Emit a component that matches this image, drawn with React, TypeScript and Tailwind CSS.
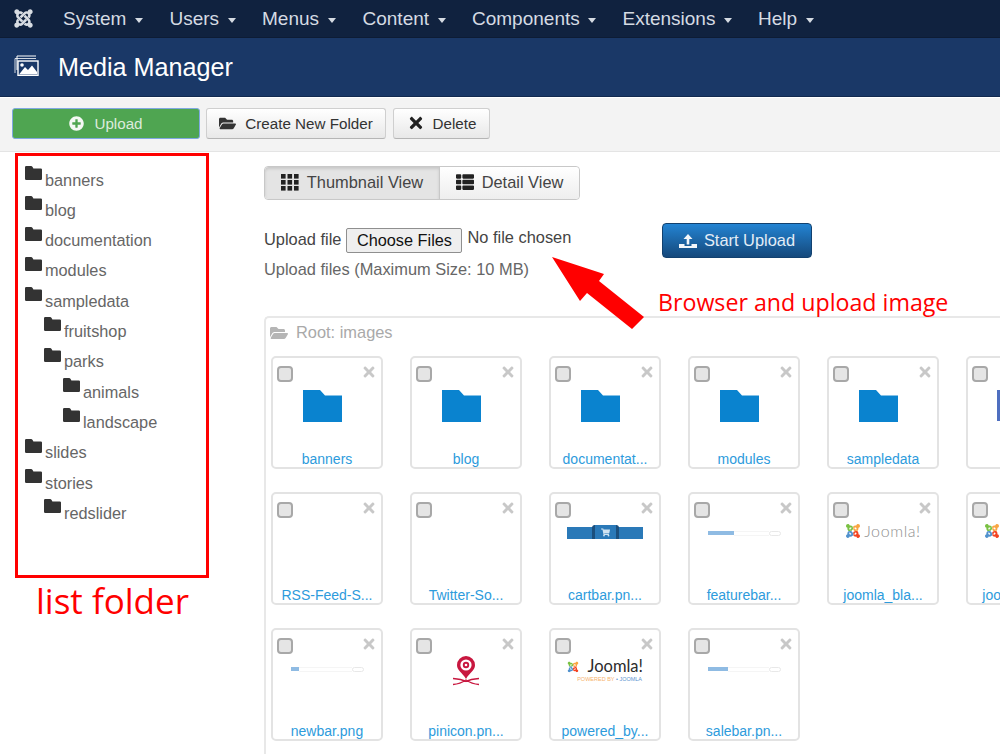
import { FaFolderOpen, FaJoomla, FaPlusCircle, FaShoppingCart, FaThList, FaTimes } from "react-icons/fa";

const navItems = [
  { label: "System", width: "w-[63px]" },
  { label: "Users", width: "w-[49px]" },
  { label: "Menus", width: "w-[57px]" },
  { label: "Content", width: "w-[66px]" },
  { label: "Components", width: "w-[107px]" },
  { label: "Extensions", width: "w-[92px]" },
  { label: "Help", width: "w-[39px]" },
];

const tree = [
  { name: "banners", level: 0 },
  { name: "blog", level: 0 },
  { name: "documentation", level: 0 },
  { name: "modules", level: 0 },
  { name: "sampledata", level: 0 },
  { name: "fruitshop", level: 1 },
  { name: "parks", level: 1 },
  { name: "animals", level: 2 },
  { name: "landscape", level: 2 },
  { name: "slides", level: 0 },
  { name: "stories", level: 0 },
  { name: "redslider", level: 1 },
];

const cards = [
  { label: "banners", thumb: "folder" },
  { label: "blog", thumb: "folder" },
  { label: "documentat...", thumb: "folder" },
  { label: "modules", thumb: "folder" },
  { label: "sampledata", thumb: "folder" },
  { label: "", thumb: "purple" },
  { label: "RSS-Feed-S...", thumb: "" },
  { label: "Twitter-So...", thumb: "" },
  { label: "cartbar.pn...", thumb: "cart" },
  { label: "featurebar...", thumb: "feature" },
  { label: "joomla_bla...", thumb: "joomla" },
  { label: "joomla_log...", thumb: "joomla" },
  { label: "newbar.png", thumb: "newbar" },
  { label: "pinicon.pn...", thumb: "pin" },
  { label: "powered_by...", thumb: "powered" },
  { label: "salebar.pn...", thumb: "salebar" },
];

const Caret = () => (
  <span className="w-0 h-0 border-x-[4.5px] border-x-transparent border-t-[5px] border-t-[#d5dbe3] mt-[2px]" />
);

const TreeFolder = () => (
  <svg viewBox="0 0 17 14" className="w-[17px] h-[14px] mt-[2.400px] shrink-0" fill="#333">
    <path d="M0 1.200Q0 0 1.200 0H6Q7 0 7.600 1L8.400 2.400H15.800Q17 2.400 17 3.600V12.800Q17 14 15.800 14H1.200Q0 14 0 12.800Z" />
  </svg>
);

const BlueFolder = () => (
  <svg viewBox="0 0 39 32" className="w-[39px] h-[32px] mt-[8px] mr-[9px]" fill="#0a83cf">
    <path d="M0 0H17L22 5.500H39V32H0Z" />
  </svg>
);

const MediaIcon = () => (
  <svg viewBox="0 0 26 21" className="w-[26px] h-[21px] mr-[19px] -mt-[3px]" fill="none">
    <path d="M4 15V1H23" stroke="#fff" strokeWidth="1" />
    <path d="M2 18V3.500H23" stroke="#fff" strokeWidth="1" opacity="0.8" />
    <rect x="5" y="6" width="20" height="14.500" fill="#1a3867" stroke="#fff" strokeWidth="1.400" />
    <circle cx="9" cy="10" r="1.800" fill="#fff" />
    <path d="M6 19.500L12 12L15 15L19 10.500L24 17V19.500Z" fill="#fff" />
  </svg>
);

const GridIcon = () => (
  <svg viewBox="0 0 18 17" className="w-[18px] h-[17px]" fill="#222">
    {[0, 6.500, 13].map((x) =>
      [0, 6, 12].map((y) => <rect key={`${x}-${y}`} x={x} y={y} width="4.600" height="4.600" />),
    )}
  </svg>
);

const JoomlaMark = ({ size }: { size: string }) => (
  <span className={`relative block shrink-0 ${size}`}>
    <FaJoomla className="absolute inset-0 w-full h-full text-[#7ac143] [clip-path:inset(0_50%_50%_0)]" />
    <FaJoomla className="absolute inset-0 w-full h-full text-[#f9a541] [clip-path:inset(0_0_50%_50%)]" />
    <FaJoomla className="absolute inset-0 w-full h-full text-[#f44321] [clip-path:inset(50%_0_0_50%)]" />
    <FaJoomla className="absolute inset-0 w-full h-full text-[#5091cd] [clip-path:inset(50%_50%_0_0)]" />
  </span>
);

const TinyBar = ({ fill, width }: { fill: string; width: string }) => (
  <div className={`flex items-center h-[6px] mt-[12px] ${width}`}>
    <div className={`h-[4px] bg-[#8fbbe3] ${fill}`} />
    <div className="flex-1 h-[5px] border-y border-[#f5f5f5]" />
    <div className="w-[12px] h-[5px] border border-[#e8e8e8] rounded-full" />
  </div>
);

const Thumb = ({ type }: { type: string }) => {
  if (type === "folder") return <BlueFolder />;
  if (type === "purple") return <div className="w-[50px] h-[31px] mt-[8px] bg-[#4f6fc0]" />;
  if (type === "cart") {
    return (
      <div className="w-[76px] h-[12px] mt-[9px] bg-[#2a79b8] flex justify-center">
        <div className="w-[27px] h-[14px] -mt-[2px] bg-[#2a79b8] border-x-[3px] border-[#1b4f7d] rounded-t-[3px] flex items-center justify-center">
          <FaShoppingCart className="w-[9px] h-[9px] text-[#cfe3f2]" />
        </div>
      </div>
    );
  }
  if (type === "feature") return <TinyBar fill="w-[26px]" width="w-[73px]" />;
  if (type === "salebar") return <TinyBar fill="w-[20px]" width="w-[73px]" />;
  if (type === "newbar") return <TinyBar fill="w-[8px]" width="w-[73px]" />;
  if (type === "joomla") {
    return (
      <div className="flex items-center h-fit gap-[3px] mt-[5px]">
        <JoomlaMark size="w-[16px] h-[16px]" />
        <span className="text-[16px] leading-[16px] text-[#8f8f8f] font-['Lato',sans-serif] font-light tracking-[0.6px]">Joomla!</span>
      </div>
    );
  }
  if (type === "powered") {
    return (
      <div className="mt-[3px] flex flex-col items-end w-[76px] h-fit">
        <div className="flex items-center justify-between w-full">
          <JoomlaMark size="w-[12px] h-[12px]" />
          <span className="text-[16.500px] leading-[19px] text-[#2b2b2b] font-['Lato',sans-serif]">Joomla!</span>
        </div>
        <span className="text-[5.500px] leading-[7px] whitespace-nowrap mr-[1px]">
          <span className="text-[#f6b26b]">POWERED BY </span>
          <span className="text-[#5b93cf]">• JOOMLA</span>
        </span>
      </div>
    );
  }
  if (type === "pin") {
    return (
      <svg viewBox="0 0 26 30" className="w-[26px] h-[30px] mt-[2px]" fill="none">
        <path d="M13 23C9 16 4 14.500 4 9A9 9 0 0 1 22 9C22 14.500 17 16 13 23Z" fill="#c8173f" />
        <circle cx="13" cy="9" r="5.600" fill="#fff" />
        <circle cx="13" cy="9" r="3.200" fill="#c8173f" />
        <circle cx="13" cy="9" r="1.300" fill="#fff" />
        <path d="M0 22.500C6 23 10 24 13 25.500C16 24 20 23 26 22.500M0 28.500C6 28 10 26 13 24C16 26 20 28 26 28.500" stroke="#c8173f" strokeWidth="1.300" />
      </svg>
    );
  }
  return null;
};

const Card = ({ label, thumb }: { label: string; thumb: string }) => (
  <div className="w-[112px] h-[113px] border-2 border-[#e3e3e3] rounded-[5px] flex flex-col bg-white">
    <div className="flex justify-between items-start mt-[8px] h-[16px] pl-[4px] pr-[4px]">
      <span className="w-[16px] h-[16px] bg-[#e5e5e5] border-2 border-[#a8a8a8] rounded-[4px]" />
      <FaTimes className="w-[16px] h-[16px] -mt-[2px] text-[#c8c8c8]" />
    </div>
    <div className="h-[67px] flex justify-center">
      <Thumb type={thumb} />
    </div>
    <div className="h-[18px] leading-[20px] text-[14px] text-center text-[#2d9bdc] whitespace-nowrap">{label}</div>
  </div>
);

const App = () => {
  return (
    <div className="relative w-[1000px] h-[754px] overflow-hidden bg-white font-['Liberation_Sans',Arial,sans-serif]">
      <nav className="h-[38px] bg-[#10223f] border-b border-[#0d1c35] flex items-center pl-[13px] text-[19px] text-[#d5dbe3]">
        <FaJoomla className="w-[21px] h-[21px] text-[#d8dde3] mr-[29px] -mt-[1px]" />
        <div className="flex items-center gap-[26.500px] pt-[1px]">
          {navItems.map((item) => (
            <div key={item.label} className="flex items-center gap-[9px]">
              <span className={`${item.width} whitespace-nowrap`}>{item.label}</span>
              <Caret />
            </div>
          ))}
        </div>
      </nav>

      <header className="h-[59px] bg-[#1a3867] border-b border-[#12294f] flex items-center pl-[13px] text-white">
        <MediaIcon />
        <h1 className="text-[25.200px] leading-none pt-[2px]">Media Manager</h1>
      </header>

      <div className="h-[55px] bg-[#f3f3f3] border-t border-b border-t-white border-b-[#e4e4e4] flex items-start gap-[6px] pl-[12px] pt-[10px] text-[15.200px] text-[#333]">
        <button className="w-[188px] h-[31px] pt-[1px] flex items-center justify-center gap-[10px] bg-[#4fa551] border border-[#7fa8e0] rounded-[3px] text-[#dcebdc]">
          <FaPlusCircle className="w-[15px] h-[15px] -mt-[2px] text-[#f4f8f4]" />
          Upload
        </button>
        <button className="w-[180px] h-[31px] pt-[1px] flex items-center justify-center gap-[9px] bg-gradient-to-b from-white to-[#e8e8e8] border border-[#cfcfcf] border-b-[#b5b5b5] rounded-[3px]">
          <FaFolderOpen className="w-[17px] h-[17px] -mt-[2px] text-[#333]" />
          Create New Folder
        </button>
        <button className="w-[97px] h-[31px] pt-[1px] ml-[1px] flex items-center justify-center gap-[8px] bg-gradient-to-b from-white to-[#e8e8e8] border border-[#cfcfcf] border-b-[#b5b5b5] rounded-[3px]">
          <FaTimes className="w-[18px] h-[18px] -mt-[2px] text-[#222]" />
          Delete
        </button>
      </div>

      <div className="flex">
        <aside className="w-[264px] shrink-0 pt-[11.600px] pl-[25px] text-[16.300px] text-[#666]">
          {tree.map((node) => (
            <div key={node.name} className={`flex h-[30.300px] leading-[30.300px] gap-[3px] ${node.level === 1 ? "ml-[19px]" : node.level === 2 ? "ml-[38px]" : ""}`}>
              <TreeFolder />
              <span className="pt-[1px]">{node.name}</span>
            </div>
          ))}
        </aside>

        <main className="flex-1 min-w-0 pt-[14px] text-[16.400px] text-[#555]">
          <div className="flex w-[316px] h-[34px] rounded-[4px] border border-[#c8c8c8] text-[#444]">
            <div className="w-[175px] pb-[2px] flex items-center justify-center gap-[8px] bg-[#e4e4e4] border-r border-[#c8c8c8] rounded-l-[4px] shadow-[inset_0_2px_3px_rgba(0,0,0,0.12)]">
              <GridIcon />
              Thumbnail View
            </div>
            <div className="flex-1 pb-[2px] flex items-center justify-center gap-[8px] bg-gradient-to-b from-white to-[#eeeeee] rounded-r-[4px]">
              <FaThList className="w-[18px] h-[18px] text-[#222]" />
              Detail View
            </div>
          </div>

          <div className="flex items-start mt-[23px]">
            <div className="w-[398px]">
              <div className="flex items-center mt-[5px] h-[25px] text-[#444]">
                <span className="mb-[2px]">Upload file</span>
                <span className="ml-[5px] w-[116px] h-[25px] flex items-center justify-center bg-[#efefef] border border-[#8f8f8f] rounded-[2px] text-[#111] text-[16.300px]">Choose Files</span>
                <span className="ml-[5px] mb-[6px]">No file chosen</span>
              </div>
              <div className="mt-[6px] h-[20px] leading-[20px] text-[#666]">Upload files (Maximum Size: 10 MB)</div>
            </div>
            <button className="w-[150px] h-[35px] flex items-center justify-center gap-[7px] bg-gradient-to-b from-[#2384d3] to-[#15497c] border border-[#12416f] rounded-[4px] text-[#e3edf7]">
              <svg viewBox="0 0 18 16" className="w-[18px] h-[16px]" fill="#f2f6fa">
                <path d="M9 1L13.500 6H10.300V11.500H7.700V6H4.500Z" />
                <path d="M0 11H5.500V13H12.500V11H18V15H0Z" />
              </svg>
              Start Upload
            </button>
          </div>

          <section className="mt-[37px] w-[800px] h-[440px] border-l-2 border-t-2 border-[#e8e8e8] rounded-tl-[5px] pl-[5px]">
            <div className="flex items-center gap-[8px] h-[29px] text-[#a9a9a9]">
              <FaFolderOpen className="w-[18px] h-[18px] -ml-[1px] text-[#b5b5b5]" />
              Root: images
            </div>
            <div className="grid grid-cols-[repeat(6,112px)] gap-x-[27px] gap-y-[23px] mt-[9px]">
              {cards.map((card, index) => (
                <Card key={index} label={card.label} thumb={card.thumb} />
              ))}
            </div>
          </section>
        </main>
      </div>

      {/* red annotations on top of the screenshot */}
      <div className="absolute left-[15px] top-[153px] w-[194px] h-[425px] border-[3px] border-[#f00]" />
      <div className="absolute left-[36px] top-[578px] text-[35px] leading-[46px] text-[#f00] font-['Open_Sans',sans-serif]">list folder</div>
      <div className="absolute left-[658px] top-[286px] text-[23.200px] leading-[32px] text-[#f00] font-['Open_Sans',sans-serif] whitespace-nowrap">Browser and upload image</div>
      <svg className="absolute left-[545px] top-[250px] w-[105px] h-[85px]" viewBox="545 250 105 85" fill="#f00">
        <polygon points="552,257 604,274 599,281 644,317 632,329 587,293 580,301" />
      </svg>
    </div>
  );
};

export default App;
